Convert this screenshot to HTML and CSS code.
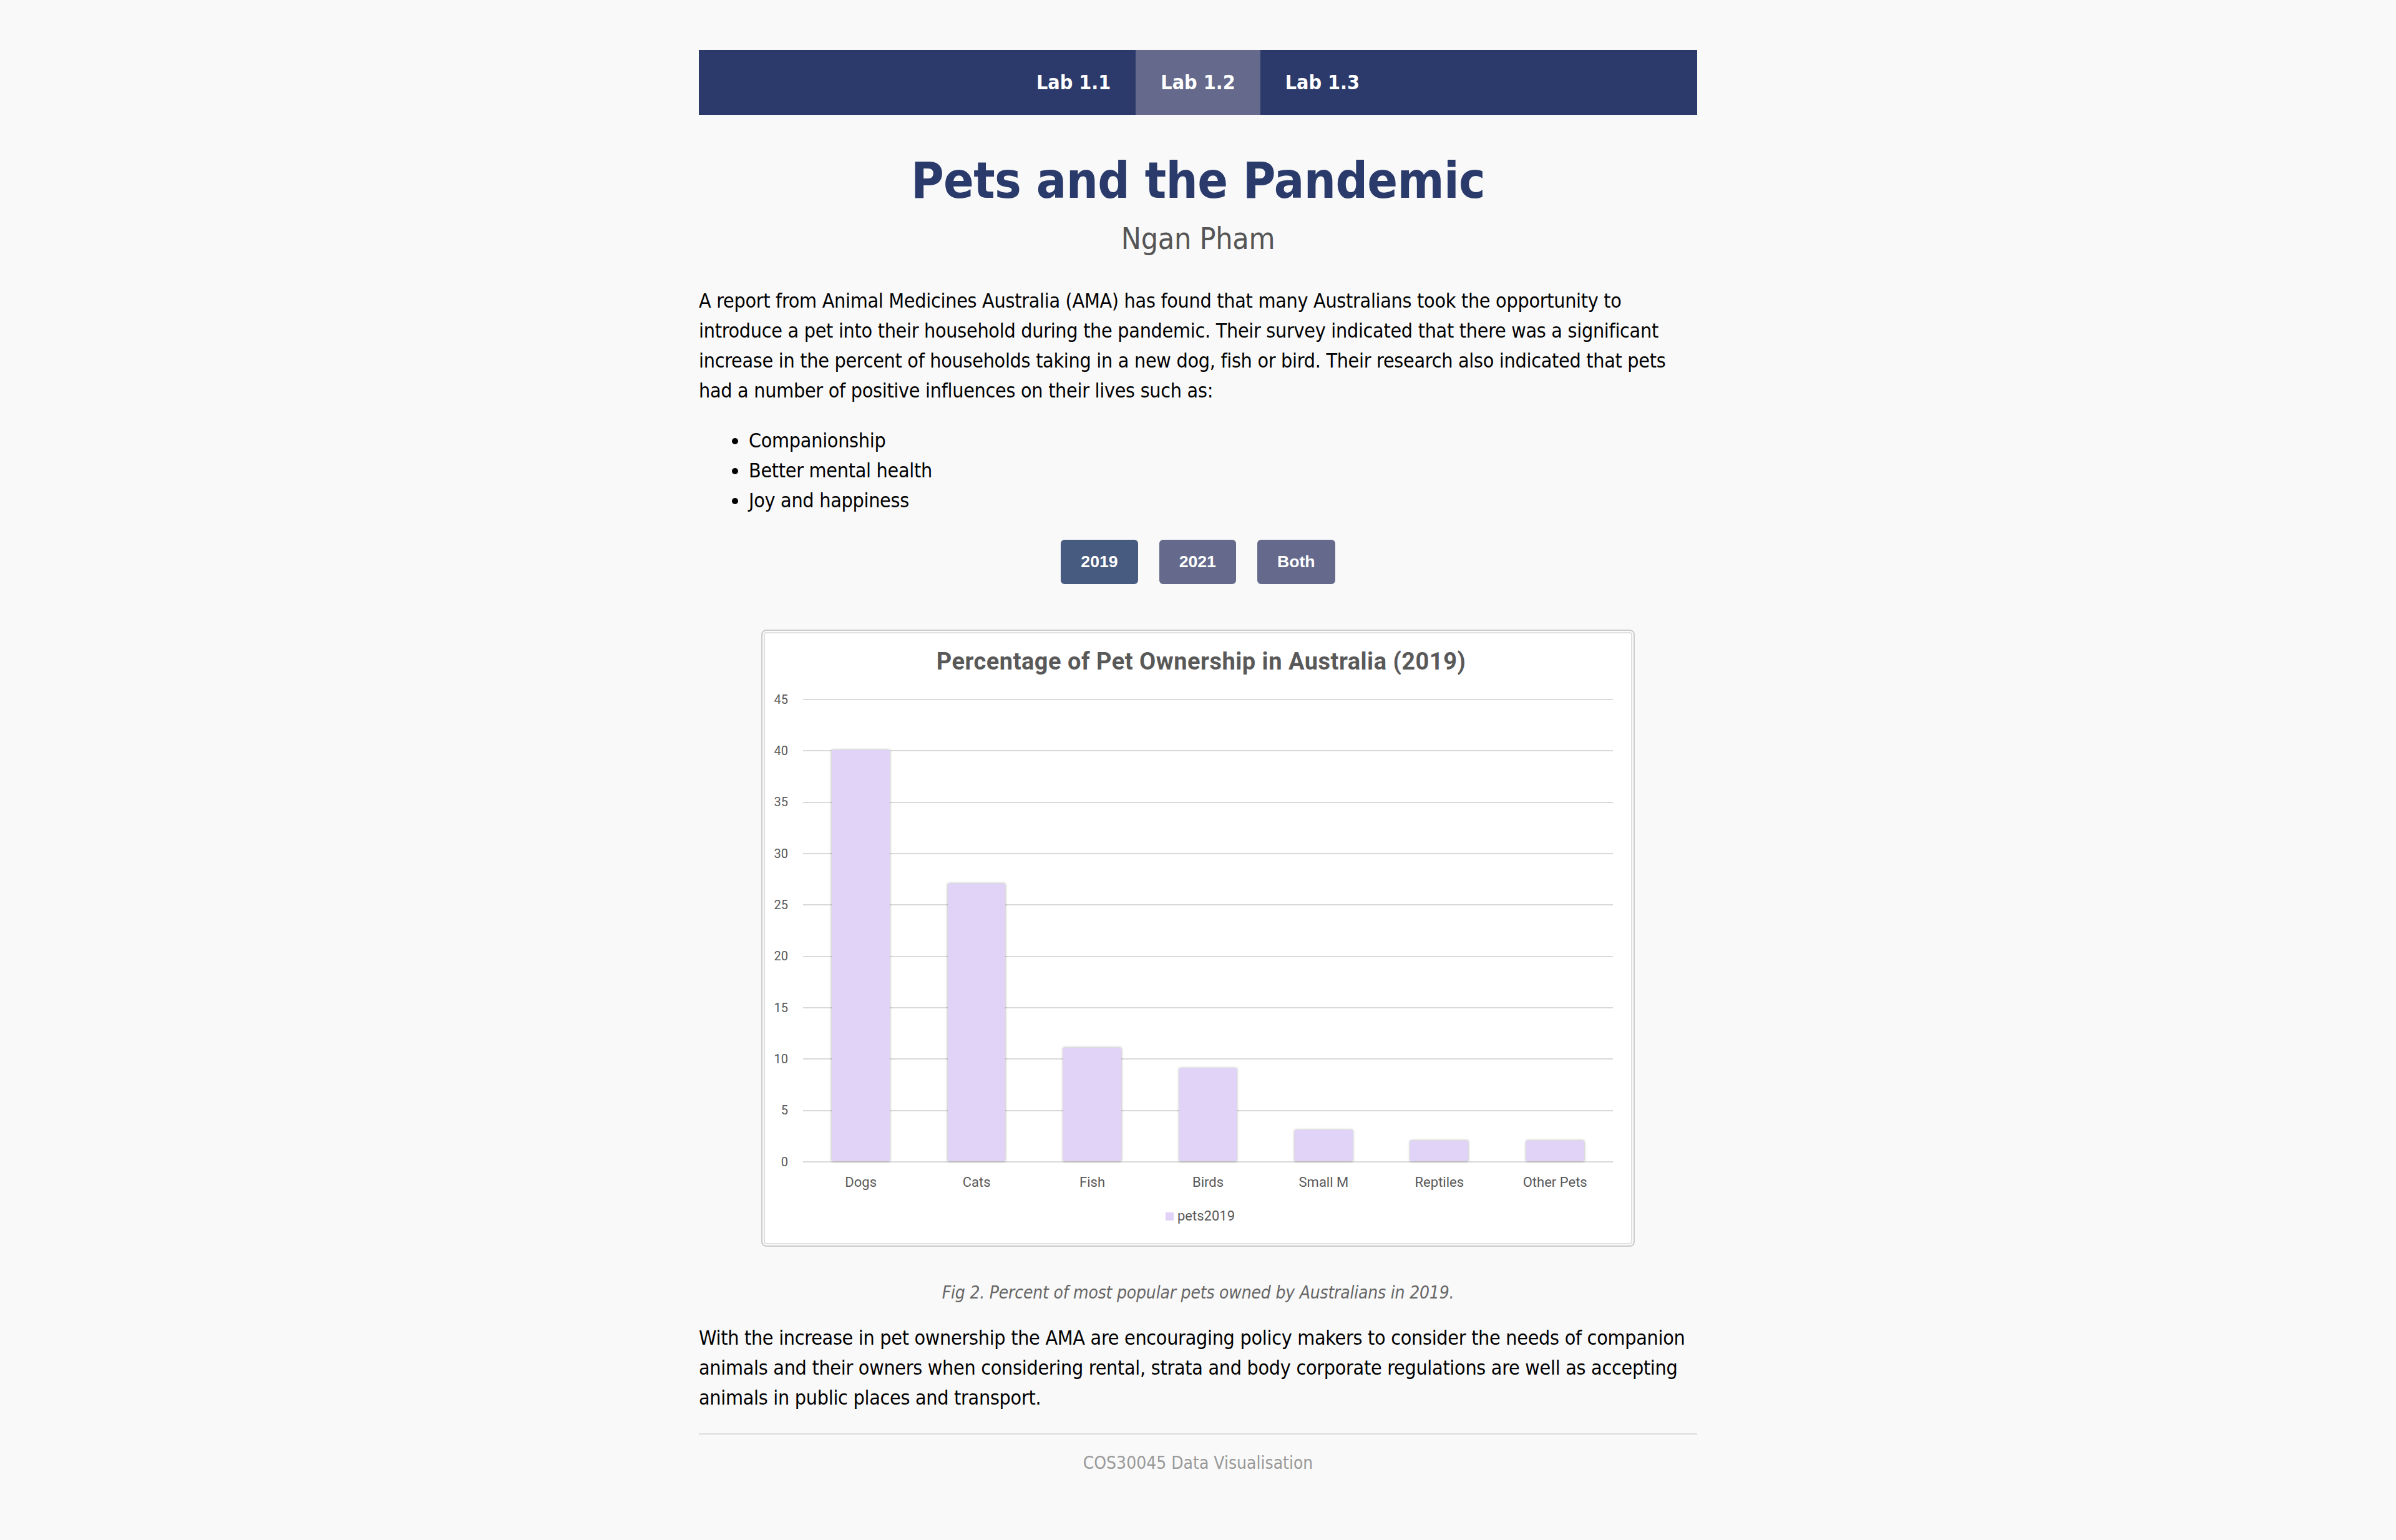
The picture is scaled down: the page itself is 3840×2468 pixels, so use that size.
FILE: index.html
```html
<!DOCTYPE html>
<html lang="en">
<head>
<meta charset="utf-8">
<title>Pets and the Pandemic</title>
<link rel="stylesheet" href="styles.css">
</head>
<body>
<div class="page">
  <nav class="topnav">
    <a class="tab" href="#">Lab 1.1</a>
    <a class="tab active" href="#">Lab 1.2</a>
    <a class="tab" href="#">Lab 1.3</a>
  </nav>

  <header class="intro">
    <h1 class="title">Pets and the Pandemic</h1>
    <p class="author">Ngan Pham</p>
  </header>

  <p class="text">A report from Animal Medicines Australia (AMA) has found that many Australians took the opportunity to introduce a pet into their household during the pandemic. Their survey indicated that there was a significant increase in the percent of households taking in a new dog, fish or bird. Their research also indicated that pets had a number of positive influences on their lives such as:</p>

  <ul class="benefits">
    <li>Companionship</li>
    <li>Better mental health</li>
    <li>Joy and happiness</li>
  </ul>

  <div class="controls">
    <button class="btn current">2019</button>
    <button class="btn">2021</button>
    <button class="btn">Both</button>
  </div>

  <figure class="figure">
    <div class="chart">
      <div class="chart-inner">
        <h2 class="chart-title">Percentage of Pet Ownership in Australia (2019)</h2>
        <div class="plot-row">
          <div class="y-axis">
            <span>45</span><span>40</span><span>35</span><span>30</span><span>25</span>
            <span>20</span><span>15</span><span>10</span><span>5</span><span>0</span>
          </div>
          <div class="plot">
            <div class="col"><div class="bar" style="height:88.889%"></div></div>
            <div class="col"><div class="bar" style="height:60%"></div></div>
            <div class="col"><div class="bar" style="height:24.444%"></div></div>
            <div class="col"><div class="bar" style="height:20%"></div></div>
            <div class="col"><div class="bar" style="height:6.667%"></div></div>
            <div class="col"><div class="bar" style="height:4.444%"></div></div>
            <div class="col"><div class="bar" style="height:4.444%"></div></div>
          </div>
        </div>
        <div class="x-axis">
          <span>Dogs</span><span>Cats</span><span>Fish</span><span>Birds</span><span>Small M</span><span>Reptiles</span><span>Other Pets</span>
        </div>
        <div class="legend"><span class="swatch"></span><span>pets2019</span></div>
      </div>
    </div>
    <figcaption class="caption">Fig 2. Percent of most popular pets owned by Australians in 2019.</figcaption>
  </figure>

  <p class="text closing">With the increase in pet ownership the AMA are encouraging policy makers to consider the needs of companion animals and their owners when considering rental, strata and body corporate regulations are well as accepting animals in public places and transport.</p>

  <footer class="footer">COS30045 Data Visualisation</footer>
</div>
</body>
</html>
```

FILE: styles.css
```css
html, body {
  margin: 0;
  padding: 0;
  background: #f9f9f9;
}

body {
  font-family: "DejaVu Sans Condensed", "DejaVu Sans", sans-serif;
  font-stretch: condensed;
  color: #000;
  font-size: 32px;
  line-height: 48px;
}

.page {
  width: 1600px;
  margin: 80px auto 0;
  padding-bottom: 100px;
}

.topnav {
  display: flex;
  justify-content: center;
  background: #2b3a6b;
  height: 104px;
}

.tab {
  display: block;
  padding: 0 40px;
  line-height: 104px;
  color: #fff;
  font-weight: bold;
  text-decoration: none;
}

.tab.active {
  background: #656a8c;
}

.intro {
  text-align: center;
  margin-top: 58px;
}

.title {
  margin: 0;
  font-size: 80px;
  line-height: 96px;
  font-weight: bold;
  letter-spacing: -0.6px;
  color: #2a3a6b;
}

.author {
  margin: 16px 0 0;
  font-size: 48px;
  line-height: 56px;
  letter-spacing: -0.3px;
  color: #555;
}

.text {
  margin: 48px 0 0;
  letter-spacing: -0.3px;
}

.benefits {
  margin: 32px 0 0;
  padding-left: 80px;
  letter-spacing: -0.3px;
}

.controls {
  display: flex;
  justify-content: center;
  gap: 34px;
  margin-top: 39px;
}

.btn {
  font-family: "Liberation Sans", Arial, sans-serif;
  font-size: 26.67px;
  font-weight: bold;
  color: #fff;
  background: #656a8c;
  border: none;
  border-radius: 6px;
  padding: 20px 32px;
  line-height: normal;
}

.btn.current {
  background: #475a80;
}

.figure {
  margin: 73px 100px 0;
}

.chart {
  border: 2px solid #cbcbcb;
  border-radius: 8px;
  padding: 2px;
  background: #fbfbfb;
}

.chart-inner {
  border: 2px solid #e0e0e0;
  border-radius: 4px;
  background: #fff;
  padding: 23px 29px 30px 10px;
  font-family: Roboto, "Liberation Sans", sans-serif;
  font-stretch: normal;
  color: #595959;
}

.chart-title {
  margin: 0 -29px 0 0;
  text-align: center;
  font-size: 38px;
  line-height: 45.6px;
  font-weight: bold;
  letter-spacing: 0.5px;
  color: #595959;
}

.plot-row {
  display: flex;
  gap: 24px;
  margin-top: 36px;
}

.y-axis {
  width: 27px;
  height: 741px;
  margin-top: 1px;
  display: flex;
  flex-direction: column;
  justify-content: space-between;
  align-items: flex-end;
  font-size: 20px;
  line-height: 24px;
}

.y-axis span {
  height: 0;
  display: flex;
  align-items: center;
}

.plot {
  flex: 1;
  height: 741px;
  display: flex;
  align-items: flex-end;
  border-bottom: 2px solid #d9d9d9;
  background: repeating-linear-gradient(to bottom, #d9d9d9 0, #d9d9d9 2px, transparent 2px, transparent 82.333px);
}

.col {
  flex: 1;
  height: 100%;
  display: flex;
  justify-content: center;
  align-items: flex-end;
}

.bar {
  width: 50%;
  background: #e0d3f7;
  box-shadow: 0 0 4px rgba(0, 0, 0, 0.35);
}

.x-axis {
  display: flex;
  margin: 19px 0 0 51px;
  font-size: 22px;
  line-height: 26.4px;
}

.x-axis span {
  flex: 1;
  text-align: center;
}

.legend {
  display: flex;
  justify-content: center;
  align-items: center;
  gap: 6px;
  margin: 28px 0 0 26px;
  font-size: 22px;
  line-height: 26.4px;
}

.swatch {
  width: 13px;
  height: 13px;
  background: #e0d3f7;
}

.caption {
  margin-top: 53px;
  text-align: center;
  font-style: italic;
  font-size: 28px;
  line-height: 42px;
  letter-spacing: -0.2px;
  color: #666;
}

.closing {
  margin-top: 27px;
}

.footer {
  margin-top: 33px;
  border-top: 2px solid #ddd;
  padding-top: 25px;
  text-align: center;
  font-size: 28px;
  line-height: 42px;
  color: #999;
}
```
